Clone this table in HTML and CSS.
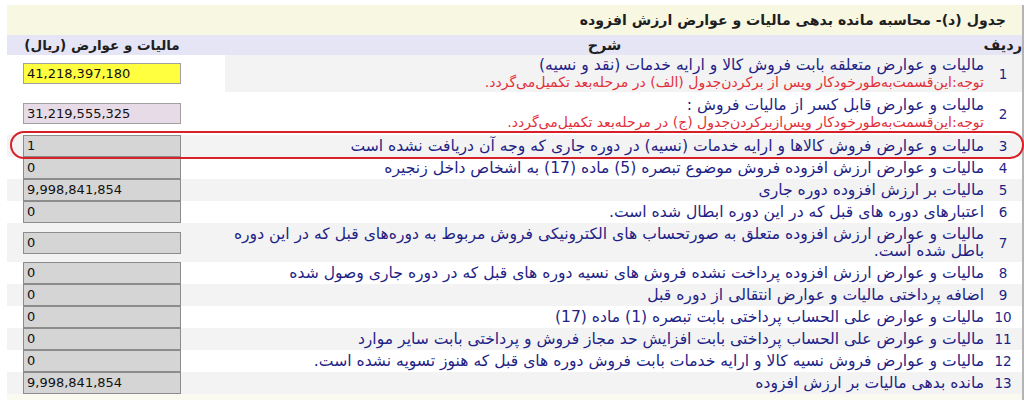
FILE: index.html
```html
<!DOCTYPE html>
<html lang="fa" dir="rtl">
<head>
<meta charset="utf-8">
<title>جدول (د)</title>
<link rel="stylesheet" href="styles.css">
</head>
<body>
<div class="page">
  <table class="grid">
    <colgroup><col class="c-num"><col class="c-desc"><col class="c-val"></colgroup>
    <tr class="title"><td colspan="3">جدول (د)- محاسبه مانده بدهی مالیات و عوارض ارزش افزوده</td></tr>
    <tr class="head">
      <th class="num">ردیف</th>
      <th class="desc-h">شرح</th>
      <th class="val"><div class="val-head">مالیات و عوارض (ریال)</div></th>
    </tr>
    <tr class="row tall odd">
      <td class="num">1</td>
      <td class="desc">مالیات و عوارض متعلقه بابت فروش کالا و ارایه خدمات (نقد و نسیه)<br><span class="note">توجه:این‌قسمت‌به‌طورخودکار وپس از برکردن‌جدول (الف) در مرحله‌بعد تکمیل‌می‌گردد.</span></td>
      <td class="val plain"><div class="box yellow">41,218,397,180</div></td>
    </tr>
    <tr class="row tall even">
      <td class="num">2</td>
      <td class="desc">مالیات و عوارض قابل کسر از مالیات فروش :<br><span class="note">توجه:این‌قسمت‌به‌طورخودکار وپس‌ازبرکردن‌جدول (ج) در مرحله‌بعد تکمیل‌می‌گردد.</span></td>
      <td class="val plain"><div class="box pink">31,219,555,325</div></td>
    </tr>
    <tr class="row odd">
      <td class="num">3</td>
      <td class="desc">مالیات و عوارض فروش کالاها و ارایه خدمات (نسیه) در دوره جاری که وجه آن دریافت نشده است</td>
      <td class="val"><div class="box">1</div></td>
    </tr>
    <tr class="row even">
      <td class="num">4</td>
      <td class="desc">مالیات و عوارض ارزش افزوده فروش موضوع تبصره (5) ماده (17) به اشخاص داخل زنجیره</td>
      <td class="val"><div class="box">0</div></td>
    </tr>
    <tr class="row odd">
      <td class="num">5</td>
      <td class="desc">مالیات بر ارزش افزوده دوره جاری</td>
      <td class="val"><div class="box">9,998,841,854</div></td>
    </tr>
    <tr class="row even">
      <td class="num">6</td>
      <td class="desc">اعتبارهای دوره های قبل که در این دوره ابطال شده است.</td>
      <td class="val"><div class="box">0</div></td>
    </tr>
    <tr class="row tall2 odd">
      <td class="num">7</td>
      <td class="desc">مالیات و عوارض ارزش افزوده متعلق به صورتحساب های الکترونیکی فروش مربوط به دوره‌های قبل که در این دوره<br>باطل شده است.</td>
      <td class="val"><div class="box">0</div></td>
    </tr>
    <tr class="row even">
      <td class="num">8</td>
      <td class="desc">مالیات و عوارض ارزش افزوده پرداخت نشده فروش های نسیه دوره های قبل که در دوره جاری وصول شده</td>
      <td class="val"><div class="box">0</div></td>
    </tr>
    <tr class="row odd">
      <td class="num">9</td>
      <td class="desc">اضافه پرداختی مالیات و عوارض انتقالی از دوره قبل</td>
      <td class="val"><div class="box">0</div></td>
    </tr>
    <tr class="row even">
      <td class="num">10</td>
      <td class="desc">مالیات و عوارض علی الحساب پرداختی بابت تبصره (1) ماده (17)</td>
      <td class="val"><div class="box">0</div></td>
    </tr>
    <tr class="row odd">
      <td class="num">11</td>
      <td class="desc">مالیات و عوارض علی الحساب پرداختی بابت افزایش حد مجاز فروش و پرداختی بابت سایر موارد</td>
      <td class="val"><div class="box">0</div></td>
    </tr>
    <tr class="row even">
      <td class="num">12</td>
      <td class="desc">مالیات و عوارض فروش نسیه کالا و ارایه خدمات بابت فروش دوره های قبل که هنوز تسویه نشده است.</td>
      <td class="val"><div class="box">0</div></td>
    </tr>
    <tr class="row odd">
      <td class="num">13</td>
      <td class="desc">مانده بدهی مالیات بر ارزش افزوده</td>
      <td class="val"><div class="box">9,998,841,854</div></td>
    </tr>
    <tr class="foot"><td colspan="3"></td></tr>
  </table>
  <div class="mark"></div>
</div>
</body>
</html>
```

FILE: styles.css
```css
html, body {
  margin: 0;
  background: #ffffff;
}
body {
  padding-top: 5px;
  font-family: "DejaVu Sans", "Noto Sans", sans-serif;
  font-size: 13px;
  color: #222;
}
.page {
  position: relative;
  width: 1015px;
  border-right: 2px solid #b4b4b4;
}
.grid {
  width: 100%;
  border-collapse: collapse;
  table-layout: fixed;
  direction: rtl;
}
.c-num { width: 38px; }
.c-val { width: 218px; }
.grid td, .grid th {
  padding: 0;
  vertical-align: middle;
  white-space: nowrap;
  overflow: hidden;
}
.title td {
  height: 30px;
  background: #f7f7e2;
  font-weight: bold;
  font-size: 14.1px;
  text-align: right;
  padding-right: 16px;
  color: #1e1e1e;
}
.head th {
  height: 20px;
  background: #e5e5f5;
  font-weight: bold;
  font-size: 14.5px;
  line-height: 18px;
  color: #1e1e1e;
}
.head .num { text-align: center; }
.head .desc-h { text-align: center; }
.val-head {
  width: 158px;
  margin-left: 16px;
  text-align: center;
  font-size: 13.5px;
}
.row td { height: 22px; }
.row.tall td { height: 37px; }
.row.tall.even td { height: 43px; }
.row.tall2 td { height: 39px; }
.row.odd td { background: #f3f3f3; }
.row.even td { background: #ffffff; }
.row td.plain { background: #ffffff; }
.num {
  text-align: center;
  color: #1f1f86;
  font-size: 13.5px;
}
.desc {
  text-align: right;
  padding-right: 2px;
  color: #1f1f86;
  font-size: 15.6px;
  line-height: 17px;
}
.note {
  color: #e2303a;
  font-size: 14px;
}
.val {
  direction: ltr;
  text-align: left;
}
.box {
  box-sizing: border-box;
  width: 158px;
  height: 22px;
  margin-left: 16px;
  padding-left: 3px;
  line-height: 20px;
  border: 1px solid #8c8c8c;
  background: #d5d5d5;
  color: #111;
  font-size: 13px;
}
.box.yellow { background: #ffff40; border-color: #a0a0a0; height: 21px; }
.box.pink { background: #e8dbe8; border-color: #a0a0a0; height: 21px; }
.foot td {
  height: 8px;
  background: #fafaf0;
}
.mark {
  position: absolute;
  left: 3px;
  top: 126px;
  width: 1014px;
  height: 28px;
  box-sizing: border-box;
  border: 2.5px solid #d82028;
  border-radius: 14px;
}
```
